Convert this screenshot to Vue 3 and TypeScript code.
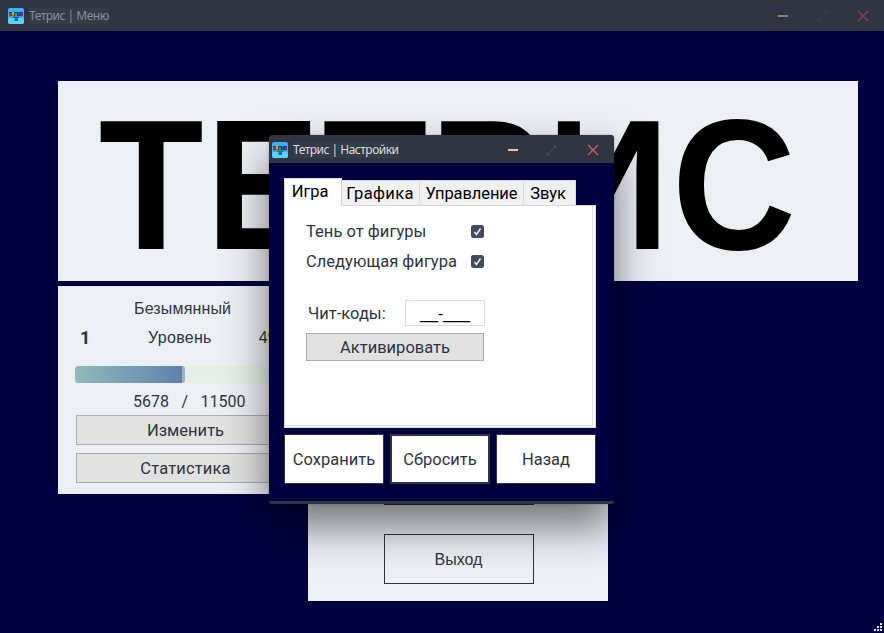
<script setup lang="ts">
import { ref } from 'vue'

interface Tab { id: string; label: string }

const tabs: Tab[] = [
  { id: 'game', label: 'Игра' },
  { id: 'graphics', label: 'Графика' },
  { id: 'steering', label: 'Управление' },
  { id: 'sound', label: 'Звук' },
]
const activeTab = ref('game')
const options = ref([
  { label: 'Тень от фигуры', on: true, key: 'shadow' },
  { label: 'Следующая фигура', on: true, key: 'next' },
])
const player = { name: 'Безымянный', level: 1, score: 5678, goal: 11500 }
const progress = `${((player.score / player.goal) * 100 + 0.4).toFixed(1)}%`
const blocks = ['#c3322b', '#e3a51a', '#3f9a35', '#1f4fb5', '#7a2aa8']
</script>

<template>
  <main class="desktop">
    <header class="bar bar-main">
      <svg class="logo" viewBox="0 0 16 16">
        <rect width="16" height="16" rx="2" fill="#35b6f2" />
        <rect y="10" width="16" height="6" rx="2" fill="#5fd0fa" />
        <rect x="1" y="4" width="14" height="4" fill="#17356f" />
        <rect v-for="(c, i) in blocks" :key="c" :x="1 + i * 2.9" :y="i % 2 ? 4 : 5" width="2.2" height="3.6" :fill="c" />
        <path d="M4.500 8.500h7v1.500H10v3H6.500v-3h-2z" fill="#126fb5" />
      </svg>
      <span class="caption">Тетрис | Меню</span>
      <svg class="controls" viewBox="0 0 100 14">
        <path d="M7 7h10" stroke="#f0c987" stroke-width="2" />
        <path d="M47 12l9-9M47 9.500v2.500h2.500M53.500 3h2.500V5.500" stroke="#56605f" fill="none" />
        <path d="M87 2l10 10M97 2L87 12" stroke="#d0626c" stroke-width="1.300" />
      </svg>
    </header>

    <section class="banner"><h1>ТЕТРИС</h1></section>

    <div class="row">
      <section class="profile">
        <div class="name">{{ player.name }}</div>
        <div class="level"><b>{{ player.level }}</b><span>Уровень</span><span class="pct">49%</span></div>
        <div class="track"><div class="fill" :style="{ width: progress }"></div></div>
        <div class="score"><span>{{ player.score }}</span><span>/</span><span>{{ player.goal }}</span></div>
        <button class="grey wide">Изменить</button>
        <button class="grey wide">Статистика</button>
      </section>
      <section class="menu">
        <button class="outline"></button>
        <button class="outline">Выход</button>
      </section>
    </div>

    <svg class="grip" viewBox="0 0 10 10" fill="#dfe2ee">
      <path d="M7 0h2v2H7zM4 3h2v2H4zM7 3h2v2H7zM1 6h2v2H1zM4 6h2v2H4zM7 6h2v2H7z" />
    </svg>

    <section class="dialog">
      <header class="bar bar-dialog">
        <svg class="logo" viewBox="0 0 16 16">
          <rect width="16" height="16" rx="2" fill="#35b6f2" />
          <rect y="10" width="16" height="6" rx="2" fill="#5fd0fa" />
          <rect x="1" y="4" width="14" height="4" fill="#17356f" />
          <rect v-for="(c, i) in blocks" :key="c" :x="1 + i * 2.9" :y="i % 2 ? 4 : 5" width="2.2" height="3.6" :fill="c" />
          <path d="M4.500 8.500h7v1.500H10v3H6.500v-3h-2z" fill="#126fb5" />
        </svg>
        <span class="caption">Тетрис | Настройки</span>
        <svg class="controls" viewBox="0 0 100 14">
          <path d="M8 7h10" stroke="#f0c987" stroke-width="2" />
          <path d="M47 12l9-9M47 9.500v2.500h2.500M53.500 3h2.500V5.500" stroke="#56605f" fill="none" />
          <path d="M88 2l10 10M98 2L88 12" stroke="#d0626c" stroke-width="1.300" />
        </svg>
      </header>
      <div class="content">
        <nav class="tabs">
          <button v-for="t in tabs" :key="t.id" :class="['tab', t.id, { active: activeTab === t.id }]" @click="activeTab = t.id">{{ t.label }}</button>
        </nav>
        <div class="pane">
          <label v-for="o in options" :key="o.key" :class="['option', o.key]">
            <span>{{ o.label }}</span>
            <svg class="check" viewBox="0 0 13 13" @click="o.on = !o.on">
              <rect width="13" height="13" rx="2.500" fill="#434c5e" />
              <path v-if="o.on" d="M3.500 7l2 2.500L9.500 3.500" fill="none" stroke="#eef1f6" stroke-width="1.500" />
            </svg>
          </label>
          <div class="cheats"><span>Чит-коды:</span><div class="code">__-___</div></div>
          <button class="grey activate">Активировать</button>
        </div>
        <footer class="actions">
          <button class="save">Сохранить</button>
          <button class="reset">Сбросить</button>
          <button class="back">Назад</button>
        </footer>
      </div>
    </section>
  </main>
</template>

<style>
body { margin: 0; overflow: hidden; }
</style>

<style scoped>
* { box-sizing: border-box; }
button { font: inherit; color: inherit; padding: 0; margin: 0; border-radius: 0; display: block; }
.desktop { position: relative; width: 884px; height: 633px; overflow: hidden; background: #000040; color: #2e3440; font: 16.500px/20px Roboto, sans-serif; white-space: nowrap; }
.bar { display: flex; align-items: center; background: #2f3541; font: 12px/16px "Noto Sans", sans-serif; color: #d8dee9; }
.bar-main { height: 31px; padding: 0 13px 0 8px; }
.bar-main .caption { color: #8a9098; }
.bar-main .controls { opacity: .5; }
.bar .controls path:nth-child(2) { opacity: .6; }
.logo { width: 16px; height: 16px; flex: none; }
.caption { margin-left: 5px; background: #343b49; letter-spacing: -.5px; }
.controls { width: 100px; height: 14px; margin-left: auto; flex: none; }
.banner { width: 800px; height: 200px; margin: 50px 0 0 58px; background: #eceff4; overflow: hidden; }
h1 { margin: 0; padding-left: 42px; font: bold 177px/202px "Liberation Sans", Arial, sans-serif; letter-spacing: 2.300px; color: #000; transform-origin: 0 39px; transform: scale(.97, 1.045); }
.row { display: flex; margin: 5px 0 0 58px; }
.profile { width: 250px; height: 208px; background: #eceff4; padding: 13px 12px 0 17px; }
.name, .level, .menu { font-family: "Liberation Sans", Arial, sans-serif; font-size: 16px; }
.name { padding-left: 59px; letter-spacing: .15px; }
.level { display: flex; margin-top: 9px; height: 20px; align-items: center; }
.level b { font: bold 18px/20px Roboto, sans-serif; width: 68px; padding-left: 5px; }
.level .pct { margin-left: 47px; }
.level span:nth-child(2) { margin-left: 5px; letter-spacing: .3px; }
.track { height: 17px; margin-top: 18px; width: 221px; border-radius: 3px; background: #e5efe8; overflow: hidden; }
.fill { height: 17px; border-radius: 3px; border-right: 3px solid #9bafd0; background: linear-gradient(90deg, #8fbcbb, #5e81ac); }
.score { display: flex; gap: 12.500px; padding-left: 58px; margin-top: 9px; height: 20px; font-size: 16px; }
.grey { background: #e1e1e1; border: 1px solid #adadad; padding-top: 2px; }
.wide { width: 219px; height: 30px; margin: 3px 0 8px 1px; }
.wide + .wide { margin-top: 0; letter-spacing: .15px; }
.menu { width: 300px; height: 315px; background: #eceff4; padding: 169px 76px 0; }
.outline { width: 150px; height: 50px; margin-bottom: 29px; padding: 2px 1px 0 0; border: 1px solid #2e3440; background: transparent; }
.grip { position: absolute; left: 873px; top: 623px; width: 10px; height: 10px; }
.dialog { position: absolute; left: 269px; top: 135px; width: 345px; height: 369px; background: #000040; border-radius: 4px 4px 3px 3px; border-bottom: 3px solid #2f3541; box-shadow: 0 22px 44px rgba(0,0,0,.53), 0 0 2px rgba(0,0,0,.3); }
.bar-dialog { height: 28px; padding: 1px 14px 0 3px; border-radius: 4px 4px 0 0; }
.content { padding: 15px 18px 0 15px; }
.tabs { display: flex; align-items: flex-end; height: 28px; position: relative; }
.tab { height: 26px; color: #000; border: 1px solid #d9d9d9; border-left: 0; background: #f0f0f0; letter-spacing: -.1px; padding-top: 2px; }
.tab.game { width: 58px; }
.tab.graphics { width: 78px; letter-spacing: .35px; padding-right: 1px; }
.tab.steering { width: 104px; }
.tab.sound { width: 52px; padding-right: 3px; }
.tab.active { height: 28px; background: #fff; border: 1px solid #d9d9d9; border-bottom: 0; padding: 0 6px 1px 0; }
.pane { width: 312px; height: 223px; margin-top: -1px; background: #fff; border: 1px solid #d9d9d9; box-shadow: inset -2px -1px #fff, inset -3px -2px #dcdcdc; padding: 16px 0 0 21px; }
.option { display: flex; justify-content: space-between; align-items: center; width: 178px; height: 20px; margin-bottom: 10px; letter-spacing: .03px; }
.check { width: 13px; height: 13px; margin-bottom: 1px; }
.cheats { display: flex; align-items: center; justify-content: space-between; width: 179px; height: 26px; padding-left: 2px; margin-top: 28px; }
.cheats span { padding-top: 2px; }
.code { width: 80px; height: 26px; border: 1px solid #d8dee9; text-align: center; font: 16px/25px "Liberation Sans", Arial, sans-serif; color: #000; }
.activate { width: 178px; height: 28px; margin-top: 7px; }
.actions { display: flex; gap: 6px; margin-top: 6px; }
.actions button { width: 100px; height: 50px; border: 1px solid #2e3440; background: #fff; padding: 2px 0 0; }
.actions .reset { border-width: 2px; }
</style>
